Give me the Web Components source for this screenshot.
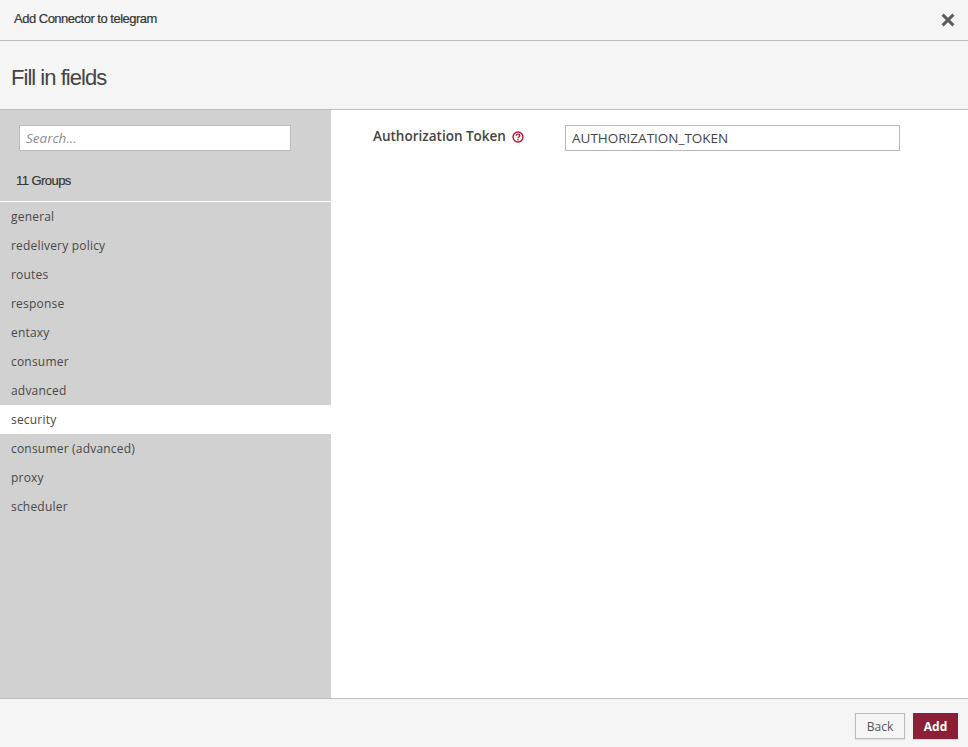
<!DOCTYPE html>
<html><head><meta charset="utf-8"><style>
html,body{margin:0;height:100%;overflow:hidden}
body{font-family:"Open Sans",sans-serif;color:#363636}
</style></head><body>
<connector-dialog></connector-dialog>
<template id="dlg"><style>
:host{display:grid;grid-template-rows:41px 69px 1fr 49px;height:747px;width:968px;background:#fff}
.head{background:#f5f5f5;border-bottom:1px solid #bbb;display:flex;align-items:center;justify-content:space-between;padding:0 13px 2px 14px}
.head h1{margin:0;font:400 13px/16px "Liberation Sans",sans-serif;color:#363636;-webkit-text-stroke:.2px #363636;letter-spacing:-.5px}
.x{display:flex;margin-top:1px}
.sub{background:#f5f5f5;border-bottom:1px solid #bbb;display:flex;align-items:center;padding:5px 11px 0}
.sub h2{margin:0;font:400 22px/28px "Liberation Sans",sans-serif;letter-spacing:-.97px;color:#444}
.body{display:flex;min-height:0}
.foot{background:#f5f5f5;border-top:1px solid #bbb;display:flex;justify-content:flex-end;align-items:flex-start;gap:8px;padding:14px 10px 0}
</style>
<header class="head"><h1>Add Connector to telegram</h1>
<span class="x"><svg width="14" height="14" viewBox="0 0 14 14"><path d="M1.6 1.6 12.4 12.4M12.4 1.6 1.6 12.4" stroke="#5c5c5c" stroke-width="3" fill="none"/></svg></span></header>
<div class="sub"><h2>Fill in fields</h2></div>
<div class="body"><group-list></group-list><token-form></token-form></div>
<footer class="foot"><dlg-button>Back</dlg-button><dlg-button primary>Add</dlg-button></footer>
</template>
<template id="list"><style>
:host{display:block;width:331px;background:#d1d1d1;flex:none}
.top{padding:15px 40px 0 19px;box-sizing:border-box;border-bottom:1px solid #fff;height:92px}
input{display:block;box-sizing:border-box;width:272px;height:26px;border:1px solid #bbb;background:#fff;padding:0 6px;margin:0;font:italic 400 13.5px "Open Sans",sans-serif;color:#363636;outline:0}
input::placeholder{color:#8b8d8f;opacity:1}
.count{margin:21px 0 0 -3px;font:400 13px/18px "Liberation Sans",sans-serif;color:#363636;-webkit-text-stroke:.2px #363636;letter-spacing:-.55px}
</style>
<div class="top"><input placeholder="Search..."><div class="count">11 Groups</div></div>
<group-item>general</group-item><group-item>redelivery policy</group-item><group-item>routes</group-item><group-item>response</group-item><group-item>entaxy</group-item><group-item>consumer</group-item><group-item>advanced</group-item><group-item active>security</group-item><group-item>consumer (advanced)</group-item><group-item>proxy</group-item><group-item>scheduler</group-item>
</template>
<template id="item"><style>
:host{display:block;height:29px;padding-left:11px;font:500 12px/29px "Open Sans",sans-serif;letter-spacing:.2px;color:#484848}
:host([active]){background:#fff}
</style><slot></slot></template>
<template id="form"><style>
:host{display:flex;flex:1;align-items:flex-start;padding:15px 0 0 42px;min-width:0}
label{display:flex;align-items:center;gap:6px;width:192px;height:22px;font:600 13.5px/22px "Open Sans",sans-serif;color:#444;flex:none}
svg{display:block;margin-top:2px}
input{box-sizing:border-box;width:335px;height:26px;border:1px solid #bbb;background:#fff;padding:0 6px;margin:0;font:400 13.5px "Open Sans",sans-serif;color:#444;outline:0}
</style>
<label>Authorization Token <svg width="12" height="12" viewBox="0 0 12 12"><circle cx="6" cy="6" r="5" fill="none" stroke="#c00f2e" stroke-width="1.4"/><path d="M4.3 4.8C4.3 3.8 5 3.2 6 3.2s1.8.6 1.8 1.5c0 1.3-1.8 1.3-1.8 2.5" fill="none" stroke="#c00f2e" stroke-width="1.3"/><rect x="5.3" y="8" width="1.4" height="1.3" fill="#c00f2e"/></svg></label>
<input value="AUTHORIZATION_TOKEN">
</template>
<template id="btn"><style>
:host{display:inline-flex;align-items:center;justify-content:center;box-sizing:border-box;height:26px;border:1px solid #bbb;background:#f5f5f5;color:#555;font:500 12px "Open Sans",sans-serif;width:50px;box-shadow:0 1px 1px rgba(0,0,0,.08)}
:host([primary]){background:#8a1f37;border-color:#8a1f37;color:#fff;font-weight:700;width:45px}
</style><slot></slot></template>
<script>
const make=(n,t)=>customElements.define(n,class extends HTMLElement{constructor(){super();this.attachShadow({mode:"open"}).appendChild(document.getElementById(t).content.cloneNode(true))}});
make("group-item","item");make("group-list","list");make("token-form","form");make("dlg-button","btn");make("connector-dialog","dlg");
</script>
</body></html>
